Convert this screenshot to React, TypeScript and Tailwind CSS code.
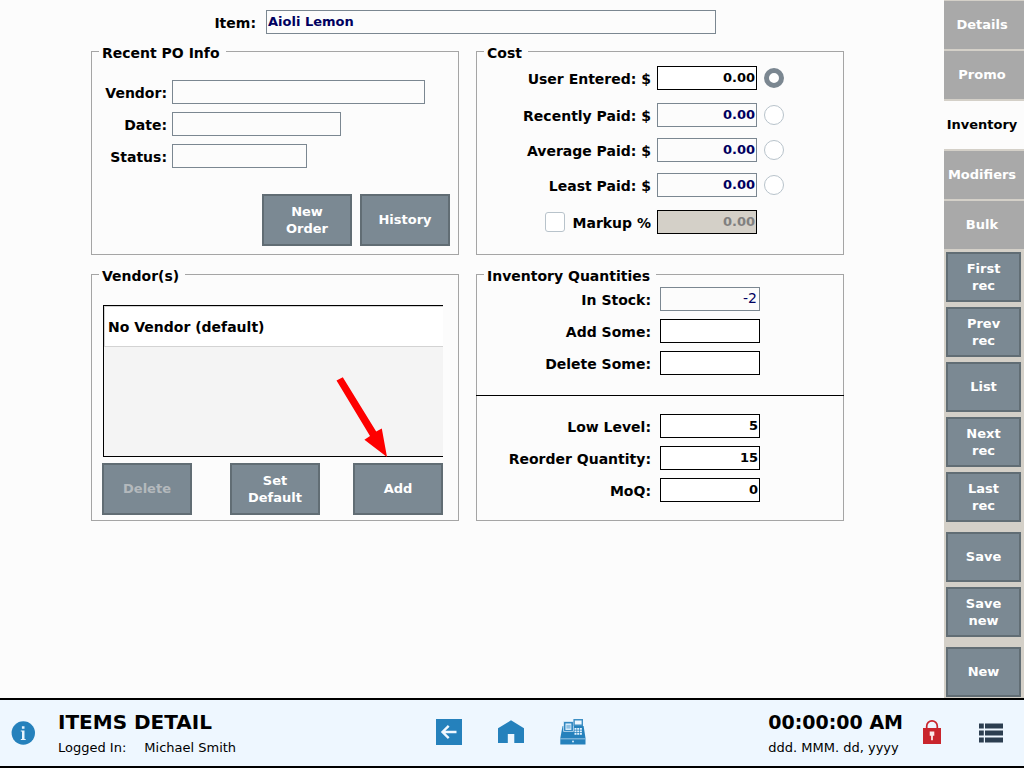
import { useId, useState } from "react";
import type { ReactNode } from "react";
import clsx from "clsx";

const tabs = ["Details", "Promo", "Inventory", "Modifiers", "Bulk"];
const recordActions = [
  ["First rec", "Prev rec", "List", "Next rec", "Last rec"],
  ["Save", "Save new"],
  ["New"],
];
const costSources = ["Recently Paid: $", "Average Paid: $", "Least Paid: $"];

const buttonStyle =
  "border-2 border-[#616d74] bg-[#7b8993] pb-px text-[13px] leading-[17px] font-bold text-white disabled:text-[#b4b9bd]";

function ActionButton({ children, disabled }: { children: ReactNode; disabled?: boolean }) {
  return (
    <button type="button" disabled={disabled} className={clsx(buttonStyle, "h-[52px] w-[90px] px-4")}>
      {children}
    </button>
  );
}

function Panel({ title, children }: { title: string; children: ReactNode }) {
  return (
    <fieldset className="min-w-0 border border-[#a5a5a5]">
      <legend className="ml-[7px] h-[19px] pt-[3px] pr-[6px] pl-[3px] leading-4">{title}</legend>
      {children}
    </fieldset>
  );
}

type FieldProps = {
  label: string;
  value?: string;
  kind?: "edit" | "view" | "off";
  labelClass: string;
  inputClass: string;
  gapClass: string;
  weightClass?: string;
  children?: ReactNode;
};

function Field({
  label,
  value = "",
  kind = "edit",
  labelClass,
  inputClass,
  gapClass,
  weightClass = "px-px text-[13px] font-bold",
  children,
}: FieldProps) {
  const id = useId();
  return (
    <div className={clsx("flex items-center", gapClass)}>
      <label htmlFor={id} className={clsx("shrink-0 pt-0.5 text-right leading-4", labelClass)}>
        {label}
      </label>
      <input
        id={id}
        type="text"
        defaultValue={value}
        readOnly={kind === "view"}
        disabled={kind === "off"}
        className={clsx(
          "h-6 min-w-0 border pb-0.5",
          weightClass,
          kind === "edit" && "border-black bg-white text-black",
          kind === "view" && "border-[#7b8791] bg-[#fcfcfc] text-[#000060]",
          kind === "off" && "border-black bg-[#d4d0c8] text-[#808080]",
          inputClass,
        )}
      />
      {children}
    </div>
  );
}

function CostRadio({ label, checked, onChange }: { label: string; checked: boolean; onChange: () => void }) {
  return (
    <input
      type="radio"
      name="cost"
      aria-label={label}
      checked={checked}
      onChange={onChange}
      className="ml-px size-5 shrink-0 appearance-none rounded-full border border-[#b8c3cb] bg-white checked:border-5 checked:border-[#7b8791]"
    />
  );
}

function CostPanel() {
  const [source, setSource] = useState("User Entered: $");
  const markupId = useId();
  const shape = { labelClass: "w-[174px]", inputClass: "w-[100px] text-right", gapClass: "gap-[6px]" };
  return (
    <Panel title="Cost">
      <div className="flex flex-col gap-[13px] pt-[5px]">
        <Field label="User Entered: $" value="0.00" {...shape}>
          <CostRadio label="User Entered" checked={source === "User Entered: $"} onChange={() => setSource("User Entered: $")} />
        </Field>
        <div className="flex flex-col gap-[11px]">
          {costSources.map((name) => (
            <Field key={name} label={name} value="0.00" kind="view" {...shape}>
              <CostRadio label={name} checked={source === name} onChange={() => setSource(name)} />
            </Field>
          ))}
        </div>
        <div className="flex items-center gap-[6px]">
          <div className="flex w-[174px] items-center justify-end gap-2">
            <input
              id={markupId}
              type="checkbox"
              className="size-5 appearance-none rounded-[3px] border border-[#b8c3cb] bg-white checked:bg-[#7b8791]"
            />
            <label htmlFor={markupId} className="pt-0.5 leading-4">
              Markup %
            </label>
          </div>
          <input
            type="text"
            aria-label="Markup percent"
            disabled
            defaultValue="0.00"
            className="h-6 w-[100px] border border-black bg-[#d4d0c8] px-px pb-0.5 text-right text-[13px] font-bold text-[#808080]"
          />
        </div>
      </div>
    </Panel>
  );
}

function VendorsPanel() {
  return (
    <Panel title="Vendor(s)">
      <div className="relative pt-[21px] pr-[15px] pl-[10px]">
        <ul className="ml-px h-[152px] border-y border-l border-black bg-[#f4f4f4]">
          <li className="flex h-[41px] items-center border border-r-0 border-[#d3d3d3] bg-white pt-0.5 pl-[3px]">
            No Vendor (default)
          </li>
        </ul>
        <div className="mt-[6px] flex justify-between">
          <div className="flex gap-[38px]">
            <ActionButton disabled>Delete</ActionButton>
            <ActionButton>Set Default</ActionButton>
          </div>
          <ActionButton>Add</ActionButton>
        </div>
        <svg
          viewBox="0 0 52 81"
          className="pointer-events-none absolute top-[92px] right-[70px] h-[81px] w-[52px]"
          aria-hidden="true"
        >
          <path d="M.5 4.6 6.8 1.2 40.2 55.5 45.8 52.5 51 81 28.4 63.8 34 60Z" fill="#fe0000" />
        </svg>
      </div>
    </Panel>
  );
}

function QuantitiesPanel() {
  const shape = { labelClass: "w-[174px]", inputClass: "w-[100px] text-right", gapClass: "gap-[9px]" };
  return (
    <Panel title="Inventory Quantities">
      <div className="flex flex-col gap-2 pt-[3px]">
        <Field label="In Stock:" value="-2" kind="view" weightClass="px-0.5 text-[14px] font-normal" {...shape} />
        <Field label="Add Some:" {...shape} />
        <Field label="Delete Some:" {...shape} />
      </div>
      <hr className="-mx-px mt-5 border-black" />
      <div className="flex flex-col gap-2 pt-[18px] pb-[18px]">
        <Field label="Low Level:" value="5" {...shape} />
        <Field label="Reorder Quantity:" value="15" {...shape} />
        <Field label="MoQ:" value="0" {...shape} />
      </div>
    </Panel>
  );
}

function Sidebar() {
  return (
    <aside className="w-20 shrink-0 bg-[#d4d0c8] pt-px pb-px">
      <nav className="flex flex-col gap-0.5">
        {tabs.map((tab) => (
          <button
            key={tab}
            type="button"
            className={clsx(
              "h-12 pr-1 text-[13px] font-bold",
              tab === "Inventory" ? "bg-[#fcfcfc] text-black" : "bg-[#a9a9a9] text-white",
            )}
          >
            {tab}
          </button>
        ))}
      </nav>
      <div className="flex flex-col gap-[10px] pt-[3px] pr-[3px] pl-0.5">
        {recordActions.map((group) => (
          <div key={group[0]} className="flex flex-col gap-[5px]">
            {group.map((action) => (
              <button key={action} type="button" className={clsx(buttonStyle, "h-[50px] px-4")}>
                {action}
              </button>
            ))}
          </div>
        ))}
      </div>
    </aside>
  );
}

function Footer() {
  return (
    <footer className="grid h-[70px] shrink-0 grid-cols-[1fr_auto_1fr] items-center border-y-2 border-black bg-[#eef7ff] text-[13px]">
      <div className="flex items-center pl-[11px]">
        <button type="button" aria-label="Information" className="pb-px">
          <svg viewBox="0 0 24 24" className="size-6" aria-hidden="true">
            <circle cx="12.3" cy="12" r="11.7" fill="#2581bc" />
            <path d="M10.9 5.2h2.6v2.6h-2.6zM9.8 9.4h3.7v8.5h1.2v1.2H9.8v-1.2h1.2v-7.3H9.8z" fill="#e8f4fd" />
          </svg>
        </button>
        <div className="ml-[23px] pt-[3px]">
          <h1 className="text-[20px] leading-[26px] font-bold">ITEMS DETAIL</h1>
          <p className="flex gap-[18px] leading-[26px]">
            <span>Logged In:</span>
            <span>Michael Smith</span>
          </p>
        </div>
      </div>
      <div className="flex items-center gap-[36px] pr-0.5 pb-0.5">
        <button type="button" aria-label="Back">
          <svg viewBox="0 0 26 26" className="size-[26px]" aria-hidden="true">
            <path d="M0 0h26v26H0z" fill="#2581bc" />
            <path d="M20.5 13H7M12.7 6.8 6.5 13l6.2 6.2" fill="none" stroke="#f0f8ff" strokeWidth="2.4" />
          </svg>
        </button>
        <button type="button" aria-label="Home">
          <svg viewBox="0 0 26 26" className="size-[26px]" aria-hidden="true">
            <path d="M13 1.3 26 9.3V24H16.3V15H9.8v9H0V9.3Z" fill="#2581bc" />
          </svg>
        </button>
        <button type="button" aria-label="Register">
          <svg viewBox="0 0 26 26" className="size-[26px]" aria-hidden="true">
            <path d="M2.6 7H23.6L25.5 19v6.5H.3V19Z" fill="#2581bc" />
            <path d="M0 19.8h26" stroke="#8fc0e2" strokeWidth="1.1" />
            <path d="M3.6 2.6h9.8v9.8H3.6z" fill="#2581bc" stroke="#eef7ff" strokeWidth=".7" />
            <path d="M5.4 4.4h6v6.6h-6z" fill="#d5eafa" />
            <path d="M6.4 6h4.2v3.6H6.4z" fill="#8fc0e2" />
            <path d="M14.1.8h8.2v5.4h-8.2z" fill="#eef7ff" stroke="#3d8fc4" strokeWidth="1.4" />
            <path d="M14.5 9.9h7.4M14.5 12.4h7.4M14.5 14.9h7.4" stroke="#e5f3fe" strokeWidth="1.8" strokeDasharray="2 .7" />
            <circle cx="13" cy="22.4" r="1" fill="#d5eafa" />
          </svg>
        </button>
      </div>
      <div className="flex items-center justify-end pr-[21px]">
        <div className="pt-[3px]">
          <time className="block text-[19px] leading-[26px] font-bold">00:00:00 AM</time>
          <p className="leading-[26px]">ddd. MMM. dd, yyyy</p>
        </div>
        <button type="button" aria-label="Lock" className="ml-5 pb-0.5">
          <svg viewBox="0 0 18 24" className="h-6 w-[18px]" aria-hidden="true">
            <path d="M3.7 9V6.2a5.3 5.3 0 0 1 10.6 0V9" fill="none" stroke="#c9252d" strokeWidth="1.7" />
            <path d="M0 8h18v16H0z" fill="#c9252d" />
            <path d="M6.7 11.5h4.6v4.3H9.9v4.4H8.1v-4.4H6.7z" fill="#fbe9ea" />
          </svg>
        </button>
        <button type="button" aria-label="Menu" className="ml-[38px] pb-px">
          <svg viewBox="0 0 24 20" className="h-5 w-6" aria-hidden="true">
            <path d="M0 .6h4.8v5H0zM6 .6h18v5H6zM0 7.6h4.8v5H0zM6 7.6h18v5H6zM0 14.6h4.8v5H0zM6 14.6h18v5H6z" fill="#2c3e50" />
          </svg>
        </button>
      </div>
    </footer>
  );
}

export default function App() {
  const poLabels = { labelClass: "w-[75px]", gapClass: "gap-[5px]" };
  return (
    <div className="flex min-h-screen flex-col bg-[#fcfcfc] font-['Verdana','DejaVu_Sans',sans-serif] text-black">
      <div className="flex flex-1">
        <main className="min-w-0 flex-1 pt-[10px] pr-[100px] pl-[91px] text-[14px] font-bold">
          <Field
            label="Item:"
            value="Aioli Lemon"
            kind="view"
            labelClass="w-[165px]"
            inputClass="w-[450px]"
            gapClass="gap-[10px]"
          />
          <div className="mt-2 grid grid-cols-2 gap-x-[17px] gap-y-[10px]">
            <Panel title="Recent PO Info">
              <div className="flex flex-col gap-2 pt-[19px]">
                <Field label="Vendor:" kind="view" inputClass="w-[253px]" {...poLabels} />
                <Field label="Date:" kind="view" inputClass="w-[169px]" {...poLabels} />
                <Field label="Status:" kind="view" inputClass="w-[135px]" {...poLabels} />
              </div>
              <div className="mt-[26px] flex justify-end gap-2 pr-2 pb-2">
                <ActionButton>New Order</ActionButton>
                <ActionButton>History</ActionButton>
              </div>
            </Panel>
            <CostPanel />
            <VendorsPanel />
            <QuantitiesPanel />
          </div>
        </main>
        <Sidebar />
      </div>
      <Footer />
    </div>
  );
}
